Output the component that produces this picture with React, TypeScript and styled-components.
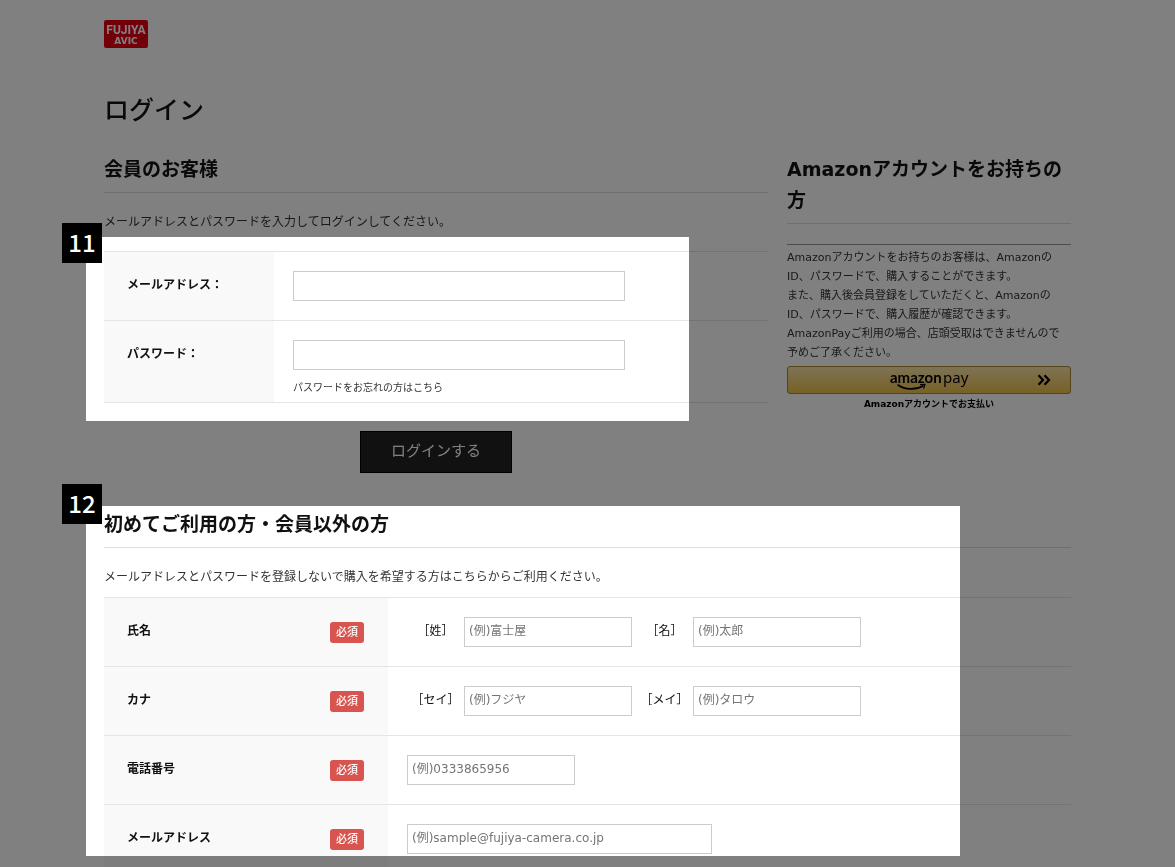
import React from "react";
import styled, { createGlobalStyle, css } from "styled-components";

const GlobalStyle = createGlobalStyle`
  *, *::before, *::after { box-sizing: border-box; }
  html { scrollbar-width: none; }
  body {
    margin: 0;
    background: #fff;
    color: #333;
    font-family: "DejaVu Sans", "Noto Sans CJK JP", sans-serif;
    font-size: 12px;
    line-height: 22px;
  }
  h1, h2, p { margin: 0; }
  input, button { font: inherit; }
`;

const Page = styled.div`
  position: relative;
  min-height: 100vh;
  padding: 20px 104px 0;
`;

const LogoLink = styled.a`
  display: block;
  width: 44px;
  height: 28px;
  svg { display: block; }
`;

const PageTitle = styled.h1`
  margin-top: 45px;
  color: #111;
  font-size: 25px;
  font-weight: 500;
  line-height: 36px;
`;

const Columns = styled.div`
  display: grid;
  grid-template-columns: minmax(0, 1fr) 284px;
  align-items: start;
  gap: 19px;
  margin-top: 25px;
`;

const SectionTitle = styled.h2`
  padding-bottom: 7px;
  border-bottom: 1px solid #ddd;
  color: #111;
  font-size: 19px;
  font-weight: 700;
  line-height: 31px;
`;

const Lead = styled.p`
  margin-top: 18px;
`;

const FormTable = styled.table<{ $gap: number }>`
  width: 100%;
  margin-top: ${(p) => p.$gap}px;
  border-collapse: separate;
  border-spacing: 0;
  border-top: 1px solid #e5e5e5;
`;

const HeadCell = styled.th<{ $width: number }>`
  width: ${(p) => p.$width}px;
  padding: 22px 24px 0 23px;
  border-bottom: 1px solid #e5e5e5;
  background: #f9f9f9;
  color: #111;
  font-weight: 700;
  text-align: left;
  vertical-align: top;
`;

const HeadLine = styled.div`
  display: flex;
  justify-content: space-between;
  align-items: flex-start;
`;

const FieldCell = styled.td<{ $tight?: boolean }>`
  padding: 19px 19px ${(p) => (p.$tight ? 3 : 19)}px;
  border-bottom: 1px solid #e5e5e5;
  color: #111;
  vertical-align: top;
`;

const Required = styled.span`
  margin-top: 2px;
  padding: 0 6px;
  border-radius: 3px;
  background: #d9534f;
  color: #fff;
  font-size: 11px;
  font-weight: 500;
  line-height: 21px;
`;

const fieldWidths = { short: 168, medium: 305, long: 332 };

const TextField = styled.input<{ $size: keyof typeof fieldWidths }>`
  display: block;
  width: ${(p) => fieldWidths[p.$size]}px;
  height: 30px;
  padding: 0 4px 2px;
  border: 1px solid #ccc;
  border-radius: 0;
  background: #fff;
  color: #333;
  outline: none;
  &::placeholder { color: #757575; opacity: 1; }
`;

const NameFields = styled.div`
  display: flex;
  gap: 4px;
`;

const NameField = styled.label`
  display: grid;
  grid-template-columns: 57px auto;
  line-height: 28px;
`;

const NamePart = styled.span`
  text-align: center;
`;

const ForgotLink = styled.a`
  display: block;
  margin-top: 7px;
  color: #333;
  font-size: 10px;
  text-decoration: none;
`;

const Actions = styled.div`
  display: flex;
  justify-content: center;
  margin-top: 28px;
`;

const LoginButton = styled.button`
  width: 152px;
  height: 42px;
  padding: 0 0 2px;
  border: 1px solid #000;
  background: #222;
  color: #fff;
  font-size: 15px;
`;

const GuestSection = styled.section`
  margin-top: 36px;
`;

const AmazonBox = styled.div`
  margin-top: 20px;
  padding-top: 3px;
  border-top: 1px solid #999;
`;

const AmazonText = styled.p`
  font-size: 11px;
  line-height: 19px;
  white-space: nowrap;
`;

const AmazonButton = styled.button`
  display: flex;
  align-items: center;
  justify-content: space-between;
  width: 100%;
  height: 28px;
  margin-top: 4px;
  padding: 0 19px 0 102px;
  border: 1px solid #a88734;
  border-radius: 3px;
  background: linear-gradient(#fbe5a9, #f0c14b);
  color: #000;
  svg { display: block; }
`;

const AmazonCaption = styled.p`
  color: #000;
  font-size: 9px;
  font-weight: 700;
  line-height: 20px;
  text-align: center;
`;

const Dimmer = styled.div`
  position: absolute;
  inset: 0;
  overflow: hidden;
  background: #808080;
  mix-blend-mode: multiply;
  pointer-events: none;
`;

const spots = {
  login: css`
    top: 237px;
    left: 86px;
    width: 603px;
    height: 184px;
  `,
  guest: css`
    top: 506px;
    right: 215px;
    left: 86px;
    height: 350px;
  `,
};

const Spotlight = styled.div<{ $spot: keyof typeof spots }>`
  position: absolute;
  background: #fff;
  ${(p) => spots[p.$spot]}
`;

const StepBadge = styled.div<{ $top: number }>`
  position: absolute;
  top: ${(p) => p.$top}px;
  left: 62px;
  width: 40px;
  height: 40px;
  background: #000;
  color: #fff;
  font-family: "Noto Sans CJK JP", sans-serif;
  font-size: 24px;
  font-weight: 500;
  line-height: 38px;
  text-align: center;
`;

const FujiyaLogo = () => (
  <svg width="44" height="28" viewBox="0 0 44 28" role="img" aria-label="FUJIYA AVIC">
    <rect width="44" height="28" rx="2" fill="#e60012" />
    <g fill="#fff" fontWeight="700" textAnchor="middle">
      <text x="22" y="14" fontSize="12" fontFamily="Roboto, sans-serif">
        FUJIYA
      </text>
      <text x="22" y="24" fontSize="9" fontFamily="'DejaVu Sans', sans-serif">
        AVIC
      </text>
    </g>
  </svg>
);

const AmazonPayLogo = () => (
  <svg width="90" height="26" viewBox="0 0 90 26" role="img" aria-label="amazon pay">
    <text x="0" y="16" fontSize="15" fontWeight="700" fontFamily="Lato, sans-serif">amazon</text>
    <text x="53" y="16" fontSize="15" fontFamily="'Noto Sans', sans-serif">pay</text>
    <path d="M8 18 C15 23 26 23 33 19" fill="none" stroke="#000" strokeWidth="1.6" strokeLinecap="round" />
    <path d="M30 17.6 L35 17.4 L33.6 21.6" fill="none" stroke="#000" strokeWidth="1.2" />
  </svg>
);

const DoubleChevron = () => (
  <svg width="14" height="12" viewBox="0 0 14 12" aria-hidden="true">
    <path d="M1.5 1.2 L6 6 L1.5 10.8 M7.5 1.2 L12 6 L7.5 10.8" fill="none" stroke="#000" strokeWidth="2.2" />
  </svg>
);

type RequiredHeadProps = { htmlFor: string; children: React.ReactNode };

const RequiredHead = ({ htmlFor, children }: RequiredHeadProps) => (
  <HeadCell scope="row" $width={284}>
    <HeadLine>
      <label htmlFor={htmlFor}>{children}</label>
      <Required>必須</Required>
    </HeadLine>
  </HeadCell>
);

const nameRows = [
  {
    title: "氏名",
    parts: [
      { id: "family-name", label: "［姓］", hint: "(例)富士屋" },
      { id: "given-name", label: "［名］", hint: "(例)太郎" },
    ],
  },
  {
    title: "カナ",
    parts: [
      { id: "family-kana", label: "［セイ］", hint: "(例)フジヤ" },
      { id: "given-kana", label: "［メイ］", hint: "(例)タロウ" },
    ],
  },
];

export default function App() {
  return (
    <>
      <GlobalStyle />
      <Page>
        <header>
          <LogoLink href="#">
            <FujiyaLogo />
          </LogoLink>
        </header>
        <main>
          <PageTitle>ログイン</PageTitle>
          <Columns>
            <section>
              <SectionTitle>会員のお客様</SectionTitle>
              <Lead>メールアドレスとパスワードを入力してログインしてください。</Lead>
              <FormTable $gap={18}>
                <tbody>
                  <tr>
                    <HeadCell scope="row" $width={170}>
                      <label htmlFor="login-mail">メールアドレス：</label>
                    </HeadCell>
                    <FieldCell>
                      <TextField id="login-mail" type="email" $size="long" />
                    </FieldCell>
                  </tr>
                  <tr>
                    <HeadCell scope="row" $width={170}>
                      <label htmlFor="login-password">パスワード：</label>
                    </HeadCell>
                    <FieldCell $tight>
                      <TextField id="login-password" type="password" $size="long" />
                      <ForgotLink href="#">パスワードをお忘れの方はこちら</ForgotLink>
                    </FieldCell>
                  </tr>
                </tbody>
              </FormTable>
              <Actions>
                <LoginButton type="button">ログインする</LoginButton>
              </Actions>
            </section>
            <aside>
              <SectionTitle>Amazonアカウントをお持ちの方</SectionTitle>
              <AmazonBox>
                <AmazonText>
                  Amazonアカウントをお持ちのお客様は、Amazonの
                  <br />
                  ID、パスワードで、購入することができます。
                  <br />
                  また、購入後会員登録をしていただくと、Amazonの
                  <br />
                  ID、パスワードで、購入履歴が確認できます。
                  <br />
                  AmazonPayご利用の場合、店頭受取はできませんので
                  <br />
                  予めご了承ください。
                </AmazonText>
                <AmazonButton type="button">
                  <AmazonPayLogo />
                  <DoubleChevron />
                </AmazonButton>
                <AmazonCaption>Amazonアカウントでお支払い</AmazonCaption>
              </AmazonBox>
            </aside>
          </Columns>
          <GuestSection>
            <SectionTitle>初めてご利用の方・会員以外の方</SectionTitle>
            <Lead>メールアドレスとパスワードを登録しないで購入を希望する方はこちらからご利用ください。</Lead>
            <FormTable $gap={9}>
              <tbody>
                {nameRows.map((row) => (
                  <tr key={row.title}>
                    <RequiredHead htmlFor={row.parts[0].id}>{row.title}</RequiredHead>
                    <FieldCell>
                      <NameFields>
                        {row.parts.map((part) => (
                          <NameField key={part.id} htmlFor={part.id}>
                            <NamePart>{part.label}</NamePart>
                            <TextField id={part.id} type="text" placeholder={part.hint} $size="short" />
                          </NameField>
                        ))}
                      </NameFields>
                    </FieldCell>
                  </tr>
                ))}
                <tr>
                  <RequiredHead htmlFor="guest-tel">電話番号</RequiredHead>
                  <FieldCell>
                    <TextField id="guest-tel" type="tel" placeholder="(例)0333865956" $size="short" />
                  </FieldCell>
                </tr>
                <tr>
                  <RequiredHead htmlFor="guest-mail">メールアドレス</RequiredHead>
                  <FieldCell>
                    <TextField
                      id="guest-mail"
                      type="email"
                      placeholder="(例)sample@fujiya-camera.co.jp"
                      $size="medium"
                    />
                  </FieldCell>
                </tr>
              </tbody>
            </FormTable>
          </GuestSection>
        </main>
        <Dimmer>
          <Spotlight $spot="login" />
          <Spotlight $spot="guest" />
        </Dimmer>
        <StepBadge $top={223}>11</StepBadge>
        <StepBadge $top={484}>12</StepBadge>
      </Page>
    </>
  );
}
